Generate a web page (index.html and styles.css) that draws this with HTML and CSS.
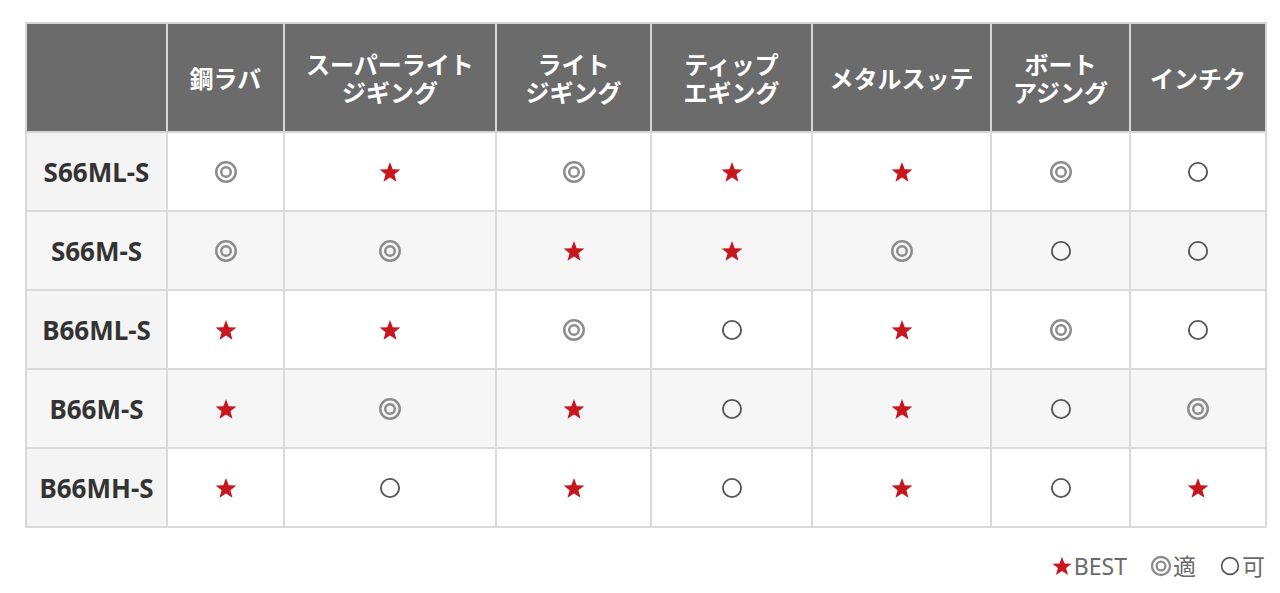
FILE: index.html
```html
<!DOCTYPE html>
<html lang="ja">
<head>
<meta charset="utf-8">
<link rel="stylesheet" href="styles.css">
</head>
<body>
<svg width="0" height="0" class="defs">
  <defs>
    <symbol id="dbl" viewBox="0 0 24 24"><circle cx="12" cy="12" r="9" fill="none" stroke="#8c8c8c" stroke-width="2.3"/><circle cx="12" cy="12" r="4.4" fill="none" stroke="#8c8c8c" stroke-width="2.3"/></symbol>
    <symbol id="cir" viewBox="0 0 24 24"><circle cx="12" cy="12" r="8.4" fill="none" stroke="#555" stroke-width="1.7"/></symbol>
    <symbol id="star" viewBox="0 0 24 24"><polygon points="12,2.8 14.5,9.4 21.6,9.7 16.1,14.1 18,21 12,17.1 6,21 7.9,14.1 2.4,9.7 9.5,9.4" fill="#c8161e"/></symbol>
  </defs>
</svg>
<div class="wrap">
<table class="chart">
  <colgroup>
    <col class="c0"><col class="c1"><col class="c2"><col class="c3"><col class="c4"><col class="c5"><col class="c6"><col class="c7">
  </colgroup>
  <thead>
    <tr>
      <th></th>
      <th>鋼ラバ</th>
      <th>スーパーライト<br>ジギング</th>
      <th>ライト<br>ジギング</th>
      <th>ティップ<br>エギング</th>
      <th>メタルスッテ</th>
      <th>ボート<br>アジング</th>
      <th>インチク</th>
    </tr>
  </thead>
  <tbody>
    <tr>
      <td class="name">S66ML-S</td>
      <td><svg class="ic"><use href="#dbl"/></svg></td>
      <td><svg class="ic"><use href="#star"/></svg></td>
      <td><svg class="ic"><use href="#dbl"/></svg></td>
      <td><svg class="ic"><use href="#star"/></svg></td>
      <td><svg class="ic"><use href="#star"/></svg></td>
      <td><svg class="ic"><use href="#dbl"/></svg></td>
      <td><svg class="ic"><use href="#cir"/></svg></td>
    </tr>
    <tr class="alt">
      <td class="name">S66M-S</td>
      <td><svg class="ic"><use href="#dbl"/></svg></td>
      <td><svg class="ic"><use href="#dbl"/></svg></td>
      <td><svg class="ic"><use href="#star"/></svg></td>
      <td><svg class="ic"><use href="#star"/></svg></td>
      <td><svg class="ic"><use href="#dbl"/></svg></td>
      <td><svg class="ic"><use href="#cir"/></svg></td>
      <td><svg class="ic"><use href="#cir"/></svg></td>
    </tr>
    <tr>
      <td class="name">B66ML-S</td>
      <td><svg class="ic"><use href="#star"/></svg></td>
      <td><svg class="ic"><use href="#star"/></svg></td>
      <td><svg class="ic"><use href="#dbl"/></svg></td>
      <td><svg class="ic"><use href="#cir"/></svg></td>
      <td><svg class="ic"><use href="#star"/></svg></td>
      <td><svg class="ic"><use href="#dbl"/></svg></td>
      <td><svg class="ic"><use href="#cir"/></svg></td>
    </tr>
    <tr class="alt">
      <td class="name">B66M-S</td>
      <td><svg class="ic"><use href="#star"/></svg></td>
      <td><svg class="ic"><use href="#dbl"/></svg></td>
      <td><svg class="ic"><use href="#star"/></svg></td>
      <td><svg class="ic"><use href="#cir"/></svg></td>
      <td><svg class="ic"><use href="#star"/></svg></td>
      <td><svg class="ic"><use href="#cir"/></svg></td>
      <td><svg class="ic"><use href="#dbl"/></svg></td>
    </tr>
    <tr>
      <td class="name">B66MH-S</td>
      <td><svg class="ic"><use href="#star"/></svg></td>
      <td><svg class="ic"><use href="#cir"/></svg></td>
      <td><svg class="ic"><use href="#star"/></svg></td>
      <td><svg class="ic"><use href="#cir"/></svg></td>
      <td><svg class="ic"><use href="#star"/></svg></td>
      <td><svg class="ic"><use href="#cir"/></svg></td>
      <td><svg class="ic"><use href="#star"/></svg></td>
    </tr>
  </tbody>
</table>
<div class="legend">
  <span class="item"><svg class="lg"><use href="#star"/></svg>BEST</span>
  <span class="item"><svg class="lg"><use href="#dbl"/></svg>適</span>
  <span class="item"><svg class="lg"><use href="#cir"/></svg>可</span>
</div>
</div>
</body>
</html>
```

FILE: styles.css
```css
html, body {
  margin: 0;
  padding: 0;
  background: #ffffff;
}
.defs {
  position: absolute;
  width: 0;
  height: 0;
}
.wrap {
  padding: 22px 15px 0 25px;
}
.chart {
  border-collapse: collapse;
  table-layout: fixed;
  width: 1240px;
  font-family: "Noto Sans", "Noto Sans CJK JP", sans-serif;
}
.c0 { width: 141px; }
.c1 { width: 117px; }
.c2 { width: 212px; }
.c3 { width: 155px; }
.c4 { width: 161px; }
.c5 { width: 179px; }
.c6 { width: 139px; }
.c7 { width: 136px; }
.chart th {
  background: #6b6b6b;
  color: #ffffff;
  font-family: "Noto Sans CJK JP", sans-serif;
  font-weight: 700;
  font-size: 24px;
  line-height: 28px;
  height: 107px;
  padding: 0;
  border: 2px solid #d6d6d6;
  text-align: center;
  vertical-align: middle;
}
.chart td {
  height: 77px;
  padding: 0;
  border: 2px solid #dadada;
  text-align: center;
  vertical-align: middle;
  background: #ffffff;
}
.chart tr.alt td {
  background: #f6f6f6;
}
.chart td.name {
  background: #f4f4f4;
  font-family: "Noto Sans", sans-serif;
  font-weight: 700;
  font-size: 26px;
  color: #333333;
}
.ic {
  width: 26px;
  height: 26px;
  display: block;
  margin: 0 auto;
}
.legend {
  display: flex;
  justify-content: flex-end;
  gap: 22px;
  margin-top: 25px;
  font-family: "Noto Sans", "Noto Sans CJK JP", sans-serif;
  font-size: 23px;
  color: #6a6a6a;
  line-height: 26px;
}
.legend .item {
  display: flex;
  align-items: center;
}
.lg {
  width: 24px;
  height: 24px;
  margin-right: 0;
}
```
